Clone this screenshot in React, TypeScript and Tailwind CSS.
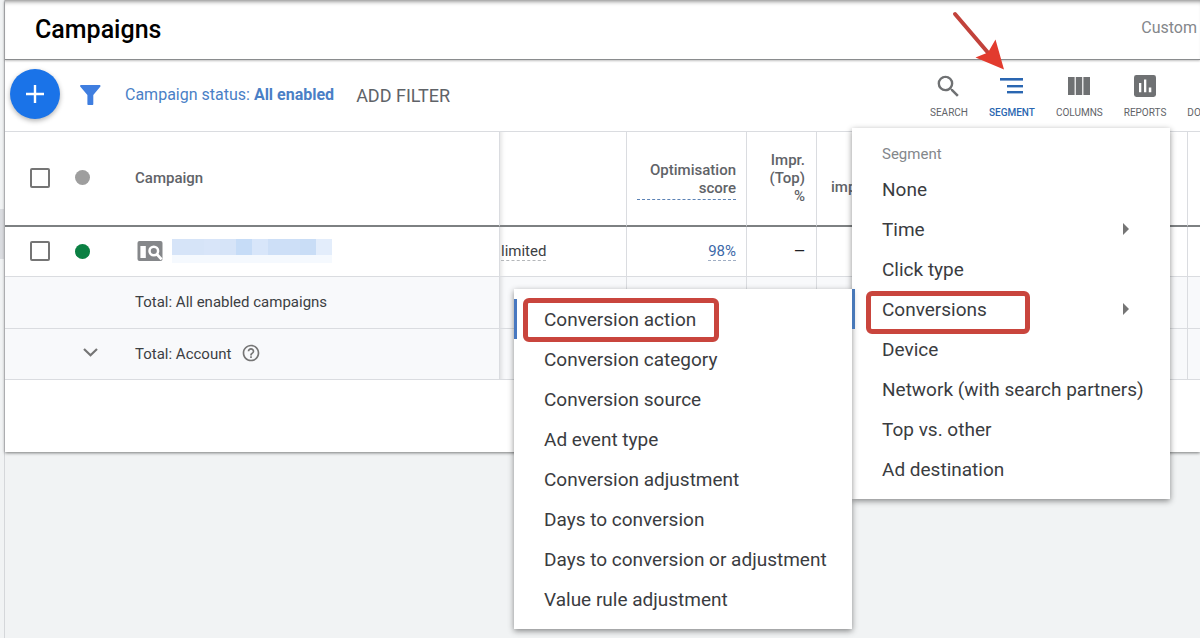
import React from "react";
import { MdSearch, MdHelpOutline } from "react-icons/md";

const segments = [
  { label: "None" },
  { label: "Time", nested: true },
  { label: "Click type" },
  { label: "Conversions", nested: true, open: true },
  { label: "Device" },
  { label: "Network (with search partners)" },
  { label: "Top vs. other" },
  { label: "Ad destination" },
];

const conversionSegments = [
  "Conversion action",
  "Conversion category",
  "Conversion source",
  "Ad event type",
  "Conversion adjustment",
  "Days to conversion",
  "Days to conversion or adjustment",
  "Value rule adjustment",
];

const redactedCells = [
  "bg-[#d6e4f8]",
  "bg-[#d6e4f8]",
  "bg-[#d8e5f9]",
  "bg-[#d6e4f8]",
  "bg-[#c6dcf7]",
  "bg-[#d8e6fa]",
  "bg-[#cddff7]",
  "bg-[#cddff7]",
  "bg-[#c9ddf6]",
  "bg-[#e3edfb]",
];

function SegmentIcon() {
  return (
    <svg width="23" height="24" viewBox="0 0 23 24" fill="#2a66b1" aria-hidden="true">
      <rect x="0" y="4" width="23" height="2.6" />
      <rect x="7" y="11" width="16" height="2.4" />
      <rect x="7" y="17" width="16" height="2.4" />
    </svg>
  );
}

function ColumnsIcon() {
  return (
    <svg width="24" height="24" viewBox="0 0 24 24" fill="#6f7173" aria-hidden="true">
      <rect x="1" y="3" width="6.6" height="18" />
      <rect x="8.8" y="3" width="6.4" height="18" />
      <rect x="16.4" y="3" width="6.6" height="18" />
    </svg>
  );
}

function ReportsIcon() {
  return (
    <svg width="24" height="24" viewBox="0 0 24 24" aria-hidden="true">
      <rect x="1" y="1" width="22" height="22" rx="2.4" fill="#6f7173" />
      <path d="M6 9h2.300v9.300H6zM11 5.600h2.300v12.700H11zM15.800 13.400h2.500v4.900h-2.500z" fill="#fff" />
    </svg>
  );
}

function ToolButton({ label, icon, active }: { label: string; icon?: React.ReactNode; active?: boolean }) {
  return (
    <button
      type="button"
      className={
        active
          ? "flex shrink-0 flex-col items-center gap-[7px] text-[10px] leading-4 font-medium text-[#2a66b1]"
          : "flex shrink-0 flex-col items-center gap-[7px] text-[10px] leading-4 text-[#5f6368]"
      }
    >
      <span className="flex h-6 items-center justify-center">{icon}</span>
      {label}
    </button>
  );
}

function SegmentMenu() {
  return (
    <div className="absolute top-[68px] right-[30px] z-20 w-[318px] bg-white py-[10px] shadow-[0_2px_6px_rgba(0,0,0,0.45)]">
      <h2 className="h-[31px] pt-1 pl-[30px] text-[15px] leading-6 text-[#84878b]">Segment</h2>
      <ul>
        {segments.map((s) => (
          <li key={s.label} className="relative">
            <button
              type="button"
              className="flex h-10 w-full items-center pt-[2px] pl-[30px] text-left text-[19px] whitespace-nowrap text-[#3a3c3f]"
            >
              {s.label}
              {s.nested && (
                <svg className="mr-[41px] mb-[2px] ml-auto" width="6" height="12" viewBox="0 0 6 12" fill="#757575" aria-hidden="true">
                  <path d="M0 0l6 6-6 6z" />
                </svg>
              )}
            </button>
            {s.open && (
              <>
                <span className="pointer-events-none absolute top-[2px] left-[14px] h-[43px] w-[164px] rounded-md border-5 border-[#c9453d]" />
                <ConversionMenu />
                <span className="absolute top-0 left-0 h-10 w-[3px] bg-[#4878b8]" />
              </>
            )}
          </li>
        ))}
      </ul>
    </div>
  );
}

function ConversionMenu() {
  return (
    <ul className="absolute top-0 right-full w-[338px] bg-white py-[10px] shadow-[0_2px_6px_rgba(0,0,0,0.45)]">
      {conversionSegments.map((label, i) => (
        <li key={label} className="relative">
          <button
            type="button"
            className="flex h-10 w-full items-center pt-[2px] pl-[30px] text-left text-[19px] whitespace-nowrap text-[#3a3c3f]"
          >
            {label}
          </button>
          {i === 0 && (
            <>
              <span className="absolute top-0 left-0 h-10 w-[3px] bg-[#4878c0]" />
              <span className="pointer-events-none absolute -top-px left-[9px] h-11 w-[196px] rounded-md border-5 border-[#c9453d]" />
            </>
          )}
        </li>
      ))}
    </ul>
  );
}

function CheckCell({ label }: { label: string }) {
  return (
    <input
      type="checkbox"
      aria-label={label}
      className="ml-[25px] block size-5 appearance-none rounded-xs border-2 border-[#757575] bg-white"
    />
  );
}

const line = "border-b border-[#dadce0]";
const col = "border-r border-[#dadce0]";
const edge = "border-r border-[#dadce0] shadow-[inset_6px_0_5px_-5px_rgba(0,0,0,0.14)]";
const totalRow = "bg-[#f8f9fb] [&>td]:border-b [&>td]:border-b-[#dadce0] [&>td]:p-0";

function CampaignTable() {
  return (
    <table className="w-full table-fixed border-separate border-spacing-0 text-[15px] text-[#3c4043]">
      <colgroup>
        <col className="w-[60px]" />
        <col className="w-[60px]" />
        <col className="w-[375px]" />
        <col className="w-[127px]" />
        <col className="w-[120px]" />
        <col className="w-[70px]" />
        <col />
        <col className="w-[12px]" />
      </colgroup>
      <thead>
        <tr className="h-[95px] leading-[18px] text-[#5f6368] [&>th]:border-b-2 [&>th]:border-b-[#7d8082] [&>th]:p-0 [&>th]:pb-[2px] [&>th]:font-medium">
          <th><CheckCell label="Select all campaigns" /></th>
          <th><span className="ml-[10px] block size-[15px] rounded-full bg-[#9e9e9e]" /></th>
          <th className={`text-left ${col}`}><span className="pl-[10px]">Campaign</span></th>
          <th className={edge} />
          <th className={col}>
            <div className="mx-[10px] border-b border-dashed border-b-[#5b82b5] pt-[6px] pb-[2px] text-right">Optimisation score</div>
          </th>
          <th className={col}>
            <div className="mr-[11px] ml-[18px] text-right">Impr. (Top) %</div>
          </th>
          <th className={`text-left ${col}`}><div className="pt-[18px] pl-[14px]">impr.</div></th>
          <th />
        </tr>
      </thead>
      <tbody>
        <tr className="h-[50px] [&>td]:border-b [&>td]:border-b-[#dadce0] [&>td]:p-0">
          <td className="[&>input]:mb-[2px]"><CheckCell label="Select campaign" /></td>
          <td><span className="ml-[10px] block size-[15px] rounded-full bg-[#0b8043]" /></td>
          <td className={col}>
            <div className="flex items-center gap-[9px] pb-[2px] pl-3">
              <svg width="26" height="20" viewBox="0 0 26 20" aria-hidden="true">
                <rect x="0.5" width="25" height="20" rx="2" fill="#85878a" />
                <rect x="3.4" y="5" width="5.4" height="12" fill="#fff" />
                <circle cx="16.8" cy="10" r="4.3" fill="none" stroke="#fff" strokeWidth="2.5" />
                <path d="M19.600 13l5 5.400" stroke="#fff" strokeWidth="2.8" />
              </svg>
              <div className="h-6 w-40 bg-[#f5f9fe]">
                <div className="flex h-4">
                  {redactedCells.map((c, i) => (
                    <span key={i} className={`flex-1 ${c}`} />
                  ))}
                </div>
              </div>
            </div>
          </td>
          <td className={edge}>
            <span className="ml-px border-b border-dashed border-[#b4b7ba]">limited</span>
          </td>
          <td className={`text-right ${col}`}>
            <a href="#score" className="mr-[10px] border-b border-dashed border-[#a0aec4] text-[#3c68a8]">98%</a>
          </td>
          <td className={`text-right ${col}`}><span className="mr-[11px] text-[14px] text-[#202124]">—</span></td>
          <td className={col} />
          <td />
        </tr>
        <tr className={`h-[52px] ${totalRow}`}>
          <td />
          <td />
          <td className={col}><span className="pl-[10px]">Total: All enabled campaigns</span></td>
          <td className={edge} />
          <td className={col} />
          <td className={col} />
          <td className={col} />
          <td />
        </tr>
        <tr className={`h-[51px] ${totalRow}`}>
          <td />
          <td>
            <button type="button" aria-label="Expand account total" className="mb-[3px] ml-[18px] flex">
              <svg width="15" height="9" viewBox="0 0 15 9" fill="none" stroke="#757575" strokeWidth="2.2" aria-hidden="true">
                <path d="M1 1l6.500 6.300L14 1" />
              </svg>
            </button>
          </td>
          <td className={col}>
            <div className="flex items-center gap-[10px] pl-[10px]">
              Total: Account
              <MdHelpOutline className="mb-[3px]" size={20} color="#757575" />
            </div>
          </td>
          <td className={edge} />
          <td className={col} />
          <td className={col} />
          <td className={col} />
          <td />
        </tr>
      </tbody>
    </table>
  );
}

export default function App() {
  return (
    <div className="flex min-h-screen overflow-hidden bg-[#f1f3f4] font-['Roboto',sans-serif]">
      <div className="w-[5px] shrink-0 border-r border-[#d5d7da] pt-[209px]">
        <div className="h-[50px] bg-[#dadce0]" />
      </div>
      <main className="min-w-0 flex-1">
        <div className="relative bg-white shadow-[0_1px_3px_rgba(0,0,0,0.5)]">
          <header className="flex h-[60px] items-center justify-between border-b border-[#8a8c8e] pr-[3px] pl-[30px] shadow-[inset_0_5px_5px_-4px_rgba(0,0,0,0.55),0_1px_2px_rgba(0,0,0,0.25)]">
            <h1 className="pt-px text-[25px] font-medium text-black">Campaigns</h1>
            <span className="pb-1 text-[16px] text-[#84878b]">Custom</span>
          </header>
          <div className={`relative flex h-[72px] items-center pl-[5px] ${line}`}>
            <button
              type="button"
              aria-label="New campaign"
              className="mb-1 flex size-[50px] shrink-0 items-center justify-center rounded-full bg-[#1a73e8] shadow-[0_2px_5px_rgba(0,0,0,0.3)]"
            >
              <svg width="18" height="18" viewBox="0 0 18 18" stroke="#fff" strokeWidth="2.4" aria-hidden="true">
                <path d="M9 0v18M0 9h18" />
              </svg>
            </button>
            <button type="button" aria-label="Filter" className="mb-[2px] ml-5 shrink-0">
              <svg width="21" height="20" viewBox="0 0 21 20" fill="#3f7ee0" aria-hidden="true">
                <path d="M1.200 0h18.200c1 0 1.400 1 .8 1.800L13.300 10v9c0 .6-.4 1-1 1H8.400c-.6 0-1-.4-1-1v-9L.4 1.800C-.2 1 .2 0 1.200 0z" />
              </svg>
            </button>
            <button type="button" className="mb-[2px] ml-6 text-[16px] whitespace-nowrap text-[#4a7fc6]">
              Campaign status: <b className="font-bold">All enabled</b>
            </button>
            <button type="button" className="ml-[22px] text-[18px] whitespace-nowrap text-[#5f6368]">ADD FILTER</button>
            <div className="ml-auto flex w-[270px] shrink-0 gap-[21px] overflow-hidden pt-1">
              <ToolButton label="SEARCH" icon={<MdSearch size={29} color="#6f7173" />} />
              <ToolButton label="SEGMENT" icon={<SegmentIcon />} active />
              <ToolButton label="COLUMNS" icon={<ColumnsIcon />} />
              <ToolButton label="REPORTS" icon={<ReportsIcon />} />
              <ToolButton label="DOWNLOAD" />
            </div>
            <SegmentMenu />
            <svg
              className="pointer-events-none absolute -top-[50px] right-[194px] z-10"
              width="54"
              height="62"
              viewBox="0 0 54 62"
              aria-hidden="true"
            >
              <path d="M3 4l35 41" stroke="#c2423b" strokeWidth="4" strokeLinecap="round" />
              <path d="M52 59.500L23.500 47.500 36 42.500 43.500 29.500z" fill="#e23b2e" />
            </svg>
          </div>
          <CampaignTable />
          <div className="h-[72px]" />
        </div>
      </main>
    </div>
  );
}
